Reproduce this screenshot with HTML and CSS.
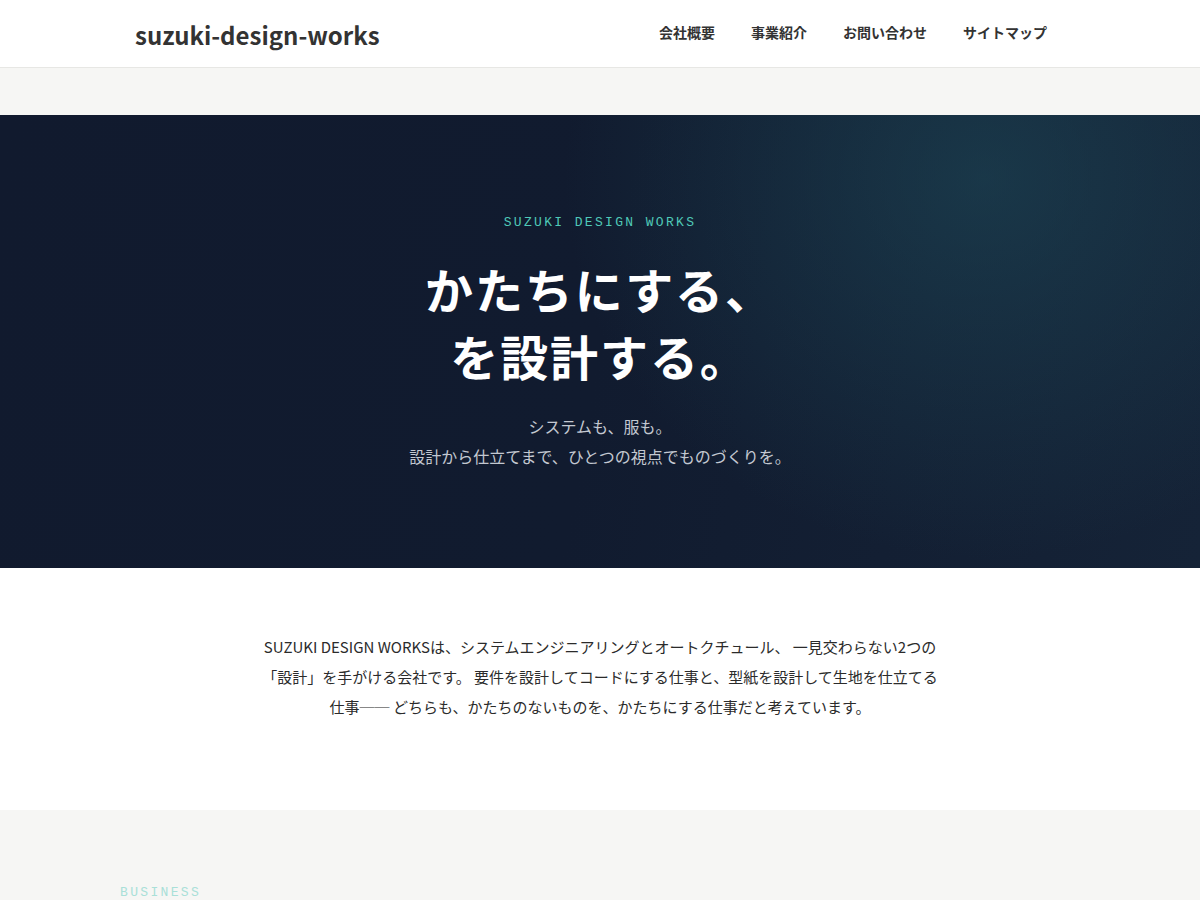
FILE: index.html
```html
<!DOCTYPE html>
<html lang="ja">
<head>
<meta charset="utf-8">
<title>suzuki-design-works</title>
<link rel="stylesheet" href="styles.css">
</head>
<body>
<header class="site-header">
  <div class="header-inner">
    <a class="logo" href="#">suzuki-design-works</a>
    <nav class="gnav">
      <ul>
        <li><a href="#">会社概要</a></li>
        <li><a href="#">事業紹介</a></li>
        <li><a href="#">お問い合わせ</a></li>
        <li><a href="#">サイトマップ</a></li>
      </ul>
    </nav>
  </div>
</header>
<div class="spacer"></div>
<section class="hero">
  <p class="hero-label">SUZUKI DESIGN WORKS</p>
  <h1 class="hero-title">かたちにする、<br>を設計する。</h1>
  <p class="hero-sub">システムも、服も。<br>設計から仕立てまで、ひとつの視点でものづくりを。</p>
</section>
<section class="intro">
  <p class="intro-text">SUZUKI DESIGN WORKSは、システムエンジニアリングとオートクチュール、 一見交わらない2つの「設計」を手がける会社です。 要件を設計してコードにする仕事と、型紙を設計して生地を仕立てる仕事── どちらも、かたちのないものを、かたちにする仕事だと考えています。</p>
</section>
<section class="business">
  <div class="container">
    <p class="section-label">BUSINESS</p>
  </div>
</section>
</body>
</html>
```

FILE: styles.css
```css
* { box-sizing: border-box; }
html, body { margin: 0; padding: 0; }
body {
  font-family: "Noto Sans CJK JP", "Noto Sans", sans-serif;
  color: #333;
  background: #f6f6f4;
}
a { color: inherit; text-decoration: none; }

.site-header {
  background: #fff;
  height: 68px;
  border-bottom: 1px solid #e7e7e4;
  box-shadow: 0 1px 3px rgba(0,0,0,0.03);
}
.header-inner {
  max-width: 960px;
  margin: 0 auto;
  height: 100%;
  padding: 0 15px;
  display: flex;
  align-items: center;
  justify-content: space-between;
}
.logo {
  font-size: 24px;
  font-weight: 700;
  color: #333;
  margin-top: 2px;
}
.gnav {
  margin-bottom: 3px;
}
.gnav ul {
  list-style: none;
  margin: 0;
  padding: 0;
  display: flex;
}
.gnav li a {
  display: block;
  padding: 0 18px;
  font-size: 14px;
  font-weight: 700;
  color: #333;
  line-height: 20px;
}

.spacer { height: 47px; background: #f6f6f4; }

.hero {
  height: 453px;
  padding: 98px 0 0;
  text-align: center;
  color: #fff;
  background:
    radial-gradient(ellipse 420px 380px at 82% 14%, rgba(30, 75, 90, 0.55), rgba(30, 75, 90, 0) 100%),
    linear-gradient(100deg, #111a2e 0%, #111b2f 50%, #152337 100%);
}
.hero-label {
  margin: 0 0 22px;
  font-family: "Liberation Mono", "DejaVu Sans Mono", monospace;
  font-size: 13px;
  line-height: 20px;
  letter-spacing: 0.18em;
  color: #4fc9b8;
}
.hero-title {
  margin: 0 0 22px;
  font-size: 48px;
  font-weight: 700;
  line-height: 67px;
  letter-spacing: 0.04em;
  color: #fff;
}
.hero-sub {
  margin: 0;
  font-size: 16px;
  line-height: 30px;
  color: #c3c8d1;
}

.intro {
  background: #fff;
  padding: 64px 0 88px;
}
.intro-text {
  max-width: 690px;
  margin: 0 auto;
  text-align: center;
  font-size: 15px;
  line-height: 30px;
  color: #2b2b2b;
}

.business {
  background: #f6f6f4;
  padding: 73px 0 40px;
}
.container {
  max-width: 960px;
  margin: 0 auto;
}
.section-label {
  margin: 0;
  font-family: "Liberation Mono", "DejaVu Sans Mono", monospace;
  font-size: 13px;
  line-height: 20px;
  letter-spacing: 0.18em;
  color: #a9e0d8;
}
```
